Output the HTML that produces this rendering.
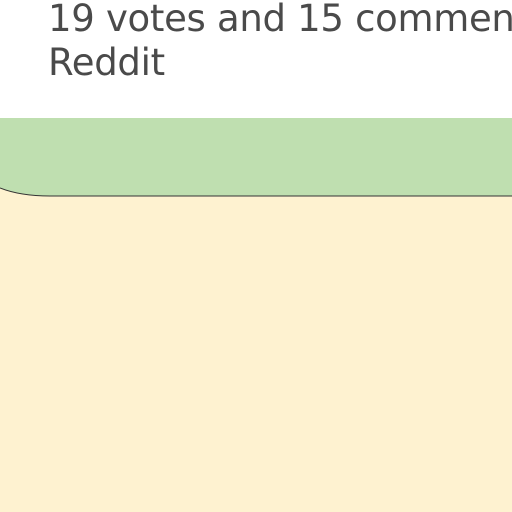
<!DOCTYPE html>
<html><head><style>
html,body{margin:0;padding:0;width:512px;height:512px;overflow:hidden;background:#fef2d0;}
.top{position:absolute;left:0;top:0;width:512px;height:118px;background:#fff;overflow:hidden;}
.t{position:absolute;left:48px;top:-3px;width:464px;overflow:hidden;font-family:"DejaVu Sans","Liberation Sans",sans-serif;font-size:37px;line-height:44px;color:#4a4a4a;white-space:nowrap;letter-spacing:-0.3px;}
</style></head><body>
<div class="top"><div class="t">19 votes and 15 comments<br>Reddit</div></div>
<svg style="position:absolute;left:0;top:118px" width="512" height="82">
<path d="M0 0H512V78H50Q20 78 0 70Z" fill="#bfdfb0"/>
<path d="M0 70Q20 78 50 78H512" fill="none" stroke="#333" stroke-width="1"/>
</svg>
</body></html>
